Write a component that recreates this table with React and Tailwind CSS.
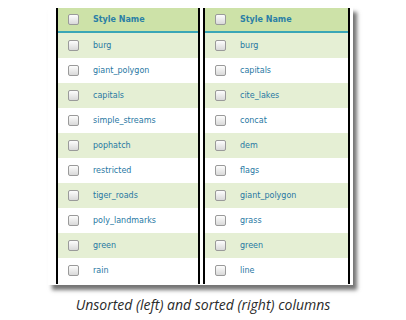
import React from 'react';

const unsorted = ['burg', 'giant_polygon', 'capitals', 'simple_streams', 'pophatch', 'restricted', 'tiger_roads', 'poly_landmarks', 'green', 'rain'];
const sorted = ['burg', 'capitals', 'cite_lakes', 'concat', 'dem', 'flags', 'giant_polygon', 'grass', 'green', 'line'];

const Checkbox = () => (
  <span className="block w-[11px] h-[11px] rounded-[2px] border border-[#9a9a9a] bg-gradient-to-b from-[#fdfdfd] to-[#d9d9d9] shrink-0" />
);

const StyleTable = ({ rows, width }) => (
  <div className={`flex flex-col border-x-2 border-black ${width}`}>
    <div className="flex items-center h-[25px] bg-[#cde2a8] border-b-2 border-[#3aa6b6] pl-[10px]">
      <Checkbox />
      <span className="ml-[14px] text-[8px] font-bold text-[#2b7fa6]">Style Name</span>
    </div>
    {rows.map((name, i) => (
      <div
        key={name + i}
        className={`flex items-center h-[25px] pl-[10px] ${i % 2 === 0 ? 'bg-[#e5efd4]' : 'bg-white'}`}
      >
        <Checkbox />
        <span className="ml-[14px] text-[8px] text-[#2878a3]">{name}</span>
      </div>
    ))}
  </div>
);

export default function App() {
  return (
    <div className="w-[406px] h-[320px] bg-white flex flex-col" style={{ fontFamily: '"DejaVu Sans", Verdana, sans-serif' }}>
      <div className="ml-[48px] mt-[7px] w-[305px] h-[278px] bg-white shadow-[4px_5px_4px_rgba(0,0,0,0.55)] flex gap-[3px] pl-[8px] pt-[1px] pb-[1px]">
        <StyleTable rows={unsorted} width="w-[144px]" />
        <StyleTable rows={sorted} width="w-[147px]" />
      </div>
      <p className="mt-[9px] text-center text-[14px] italic text-[#2a2a2a]" style={{ fontFamily: '"Open Sans", sans-serif' }}>
        Unsorted (left) and sorted (right) columns
      </p>
    </div>
  );
}
